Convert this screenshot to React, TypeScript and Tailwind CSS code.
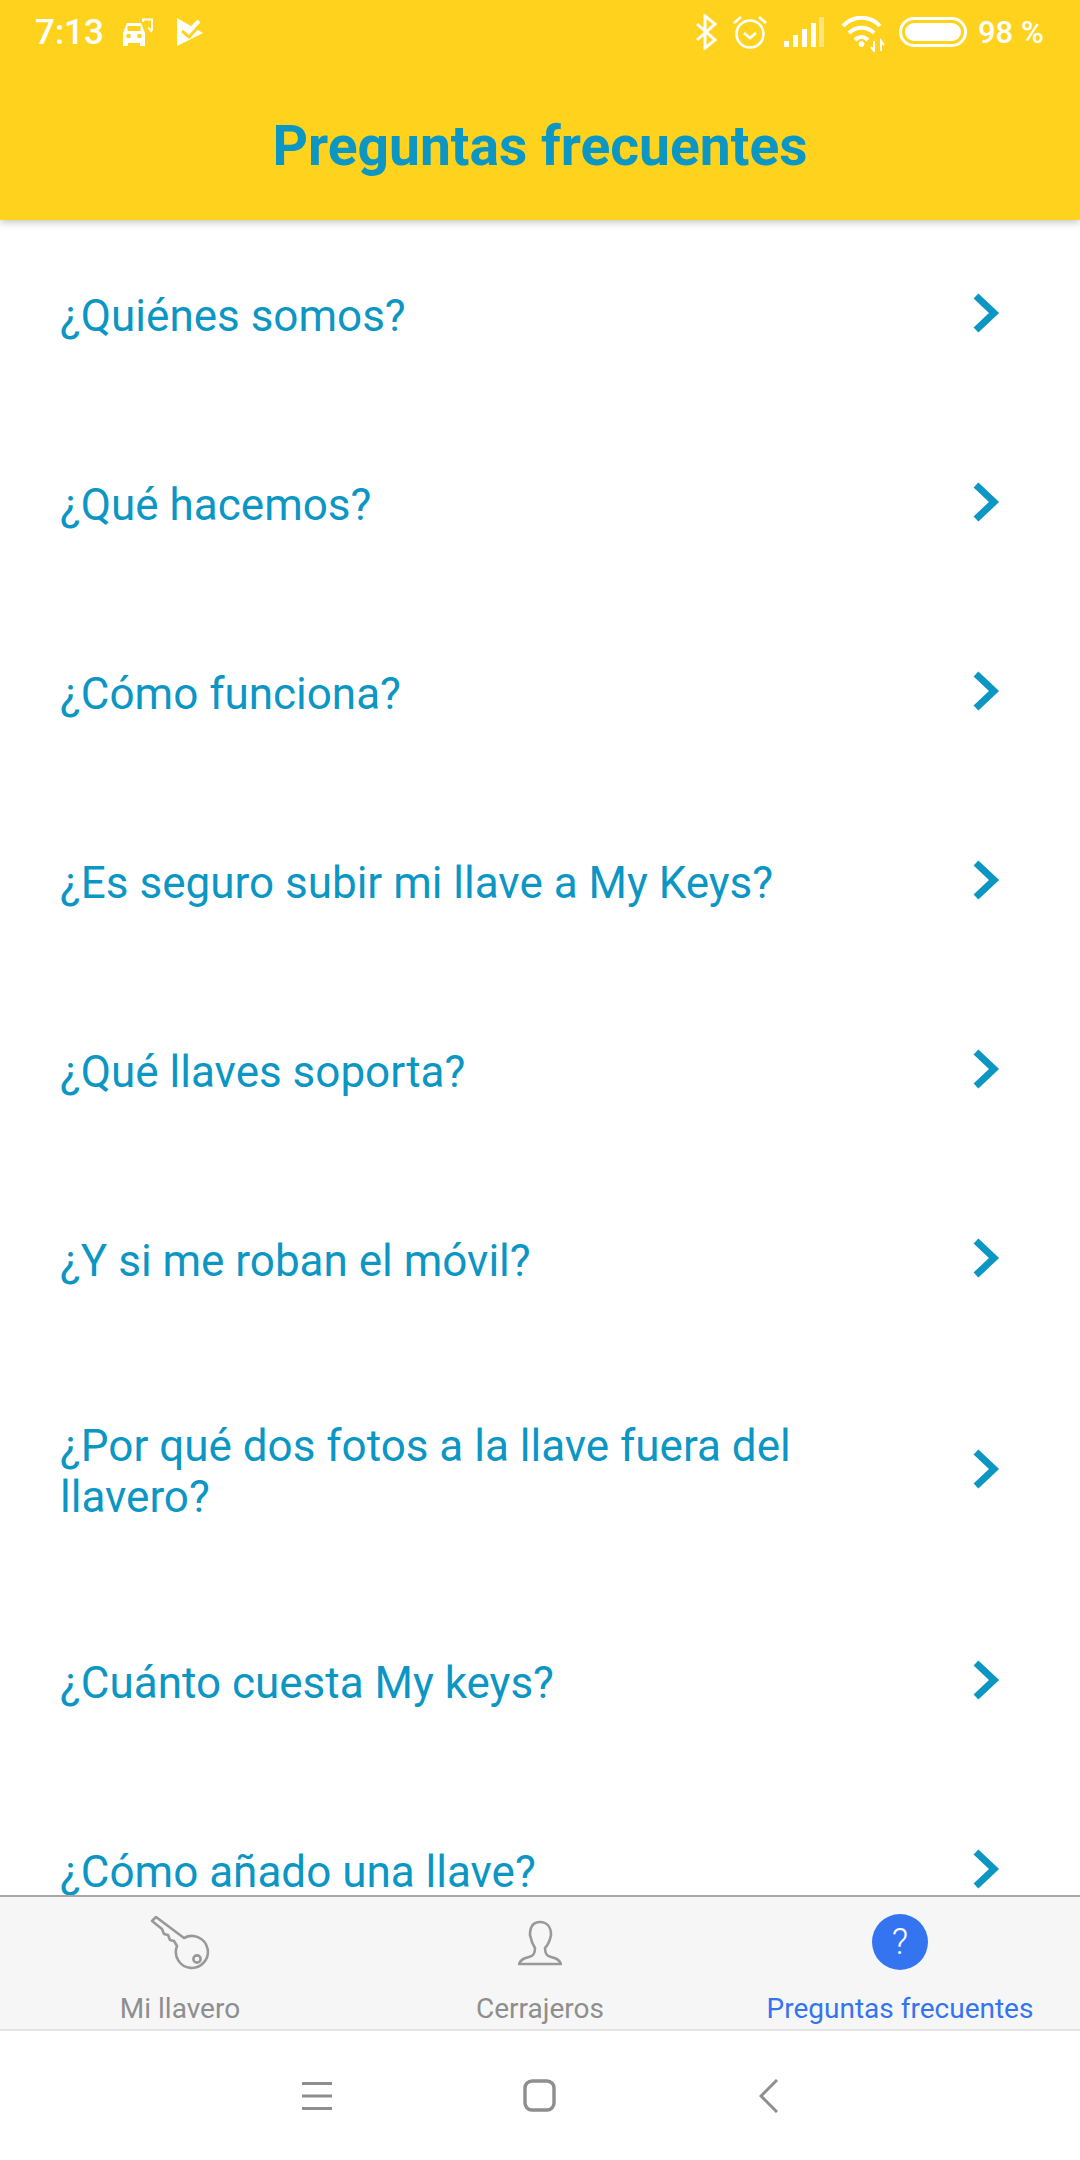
const rows: string[] = [
  "¿Quiénes somos?",
  "¿Qué hacemos?",
  "¿Cómo funciona?",
  "¿Es seguro subir mi llave a My Keys?",
  "¿Qué llaves soporta?",
  "¿Y si me roban el móvil?",
  "¿Por qué dos fotos a la llave fuera del llavero?",
  "¿Cuánto cuesta My keys?",
  "¿Cómo añado una llave?",
];

function Chevron() {
  return (
    <svg width="30" height="44" viewBox="0 0 30 44" className="shrink-0 mb-[3px]" fill="none">
      <path d="M5 5 L23 22 L5 39" stroke="#0b96c4" strokeWidth="7" />
    </svg>
  );
}

function StatusBar() {
  return (
    <div className="relative h-[64px] shrink-0 flex items-center justify-between pl-[35px] pr-[36px] text-white font-medium text-[32px]">
      <div className="flex items-center">
        <span className="text-[35px] leading-none w-[70px]">7:13</span>
        <svg width="32" height="29" viewBox="0 0 32 29" className="ml-[17px]" fill="none">
          <path d="M1 28v-13l4-10h14l4 10v13h-5v-3H6v3z" fill="white" />
          <rect x="5.5" y="8" width="13" height="5" fill="#ffd31d" />
          <circle cx="6.5" cy="18" r="2.3" fill="#ffd31d" />
          <circle cx="17.5" cy="18" r="2.3" fill="#ffd31d" />
          <path d="M21 4V1.5h9V12L28.5 14M26 9.5l2.5 2.5" stroke="white" strokeWidth="1.8" />
        </svg>
        <svg width="27" height="28" viewBox="0 0 27 28" className="ml-[23px]" fill="white">
          <path d="M0 0 L26 15 L0 28Z" />
          <path d="M5 13 L12 19 L25 5" fill="none" stroke="#ffd31d" strokeWidth="3" />
          <path d="M9 7 L13 12 L22 3" fill="none" stroke="white" strokeWidth="4" />
        </svg>
      </div>
      <div className="flex items-center">
        <svg width="22" height="36" viewBox="0 0 22 36" fill="none" stroke="white" strokeWidth="3">
          <path d="M2 10 L20 26 L10 34 V2 L20 10 L2 26" />
        </svg>
        <svg width="36" height="36" viewBox="0 0 36 36" className="ml-[15px]" fill="none" stroke="white" strokeWidth="2.6">
          <circle cx="18" cy="20" r="13.5" />
          <path d="M12 19 L18 24 L24 19" />
          <path d="M2 9 L9 3 M34 9 L27 3" />
        </svg>
        <svg width="40" height="30" viewBox="0 0 40 30" className="ml-[16px]" fill="white">
          <rect x="0" y="24" width="5" height="6" />
          <rect x="9" y="18" width="5" height="12" />
          <rect x="18" y="12" width="5" height="18" />
          <rect x="27" y="6" width="5" height="24" />
          <rect x="35" y="0" width="5" height="30" fill="#ffe47f" />
        </svg>
        <svg width="44" height="36" viewBox="0 0 44 36" className="ml-[17px] mt-[3px]" fill="none" stroke="white" strokeWidth="4">
          <path d="M2 10 C12 -1 29 -1 39 10" />
          <path d="M8 17 C15 10 26 10 33 17" />
          <path d="M14 24 C18 20 23 20 27 24" />
          <circle cx="20.5" cy="28" r="2.5" fill="white" stroke="white" strokeWidth="1" />
          <path d="M33 25 V35 L30 31 M40 35 V25 L43 29" strokeWidth="2" />
        </svg>
        <div className="ml-[14px] w-[68px] h-[30px] rounded-full border-[3px] border-white p-[3px] flex">
          <div className="flex-1 rounded-full bg-white" />
        </div>
        <span className="ml-[11px] text-[31px] leading-none w-[66px] whitespace-nowrap">98 %</span>
      </div>
    </div>
  );
}

function KeyIcon() {
  return (
    <svg width="60" height="60" viewBox="0 0 60 60" className="mt-[1px]" fill="none" stroke="#999999" strokeWidth="2.6" strokeLinejoin="round">
      <path d="M2 6 L6 2 L34 23 A16 16 0 1 1 27 31 L24 26 L20 25 L18 20 L14 19 L12 14 Z" />
      <circle cx="47" cy="44" r="3.6" />
    </svg>
  );
}

function PersonIcon() {
  return (
    <svg width="44" height="46" viewBox="0 0 44 46" className="mb-[2px]" fill="none" stroke="#999999" strokeWidth="2.6" strokeLinejoin="round">
      <path d="M1 44 H43 C41 39 37 38 33 37 C28 36 27 33 27 28 C30 25 32 20 33 15 C33 6 28 2 22 2 C16 2 12 6 12 15 C13 20 15 25 17 28 C17 33 16 36 11 37 C7 38 3 39 1 44Z" />
    </svg>
  );
}

function Tab({ label, active, children }: { label: string; active?: boolean; children: React.ReactNode }) {
  return (
    <div className="flex-1 flex flex-col items-center pt-[17px]">
      <div className="h-[60px] flex items-center justify-center">{children}</div>
      <div className={`mt-[18px] text-[28px] leading-[34px] whitespace-nowrap ${active ? "text-[#3574f0]" : "text-[#8e8e8e]"}`}>{label}</div>
    </div>
  );
}

export default function App() {
  return (
    <div className="w-[1080px] h-[2160px] flex flex-col bg-white overflow-hidden font-['Roboto',sans-serif]">
      <header className="relative z-10 h-[220px] shrink-0 flex flex-col bg-[#ffd31d] shadow-[0_2px_8px_rgba(0,0,0,0.25)]">
        <StatusBar />
        <h1 className="text-center font-bold text-[55.2px] leading-[56px] mt-[54px] text-[#0b96c4]">Preguntas frecuentes</h1>
      </header>
      <main className="flex-1 overflow-hidden">
        {rows.map((r) => (
          <div key={r} className="min-h-[189px] flex items-center justify-between pl-[60px] pr-[79px] py-[64px] text-[44px] leading-[51px] text-[#0b96c4]">
            <span className="w-[760px] mt-[3px]">{r}</span>
            <Chevron />
          </div>
        ))}
      </main>
      <nav className="h-[136px] shrink-0 flex bg-[#f6f6f6] border-t-2 border-b-2 border-t-[#a8a8a8] border-b-[#e4e4e4]">
        <Tab label="Mi llavero"><KeyIcon /></Tab>
        <Tab label="Cerrajeros"><PersonIcon /></Tab>
        <Tab label="Preguntas frecuentes" active>
          <div className="w-[56px] h-[56px] mb-[4px] rounded-full bg-[#3574f0] flex items-center justify-center text-white text-[36px] font-light leading-none">?</div>
        </Tab>
      </nav>
      <div className="h-[129px] shrink-0 flex items-center justify-center">
        <svg width="30" height="30" viewBox="0 0 30 30" stroke="#8e8e8e" strokeWidth="3">
          <path d="M0 2.5H30M0 15H30M0 27.5H30" />
        </svg>
        <svg width="33" height="33" viewBox="0 0 33 33" className="ml-[191px]" fill="none" stroke="#8e8e8e" strokeWidth="3.4">
          <rect x="2" y="2" width="29" height="29" rx="7" />
        </svg>
        <svg width="19" height="34" viewBox="0 0 19 34" className="ml-[203px]" fill="none" stroke="#8e8e8e" strokeWidth="3">
          <path d="M18 1 L2 17 L18 33" />
        </svg>
      </div>
    </div>
  );
}
